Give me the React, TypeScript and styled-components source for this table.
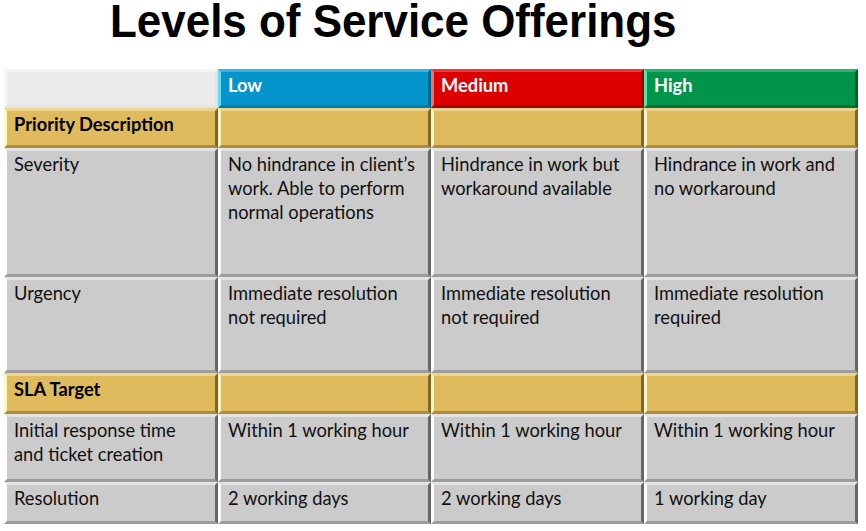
import React from "react";
import styled, { createGlobalStyle, css } from "styled-components";

const Global = createGlobalStyle`
  html, body { margin: 0; padding: 0; background: #ffffff; }
  body { font-family: "Lato", "Open Sans", sans-serif; }
`;

const Page = styled.div`
  width: 866px;
  height: 531px;
  background: #fff;
  display: flex;
  flex-direction: column;
  overflow: hidden;
`;

const TitleBar = styled.div`
  height: 69px;
  padding-left: 110px;
  box-sizing: border-box;
`;

const Title = styled.h1`
  margin: 0;
  display: inline-block;
  font-family: "Liberation Sans", Arial, sans-serif;
  font-weight: 700;
  font-size: 46px;
  line-height: 42px;
  color: #000;
  white-space: nowrap;
  transform-origin: 0 0;
  transform: scaleX(0.955);
`;

const Table = styled.div`
  margin-left: 4px;
  display: grid;
  grid-template-columns: 214px 213px 213px 214px;
  grid-template-rows: 39px 40px 129px 96px 41px 68px 42px;
`;

type Tone = "blank" | "blue" | "red" | "green" | "gold" | "gray";

const tones: Record<Tone, { bg: string; t: string; l: string; r: string; b: string; fg: string }> = {
  blank: { bg: "#ebebeb", t: "#f4f4f4", l: "#f6f6f6", r: "#e2e2e2", b: "#e4e4e4", fg: "#000" },
  blue: { bg: "#0395cc", t: "#3ab3e0", l: "#5cdcf6", r: "#02658e", b: "#037aa8", fg: "#fff" },
  red: { bg: "#dc0000", t: "#e83c3c", l: "#f27070", r: "#8c0000", b: "#a40000", fg: "#fff" },
  green: { bg: "#00954a", t: "#2fb271", l: "#4ee6a4", r: "#005a2c", b: "#006f38", fg: "#fff" },
  gold: { bg: "#dfbb5d", t: "#edd48e", l: "#fff5c4", r: "#7e6628", b: "#ad8d3e", fg: "#000" },
  gray: { bg: "#cbcbcb", t: "#e3e3e3", l: "#ffffff", r: "#666666", b: "#9c9c9c", fg: "#111" },
};

const Cell = styled.div<{ $tone: Tone; $bold?: boolean }>`
  box-sizing: border-box;
  padding: 1px 4px 0 7px;
  font-size: 18.3px;
  line-height: 24px;
  white-space: pre-line;
  ${({ $tone }) => {
    const c = tones[$tone];
    return css`
      background: ${c.bg};
      color: ${c.fg};
      border-style: solid;
      border-width: 3px;
      border-top-color: ${c.t};
      border-left-color: ${c.l};
      border-right-color: ${c.r};
      border-bottom-color: ${c.b};
    `;
  }}
  font-weight: ${({ $bold }) => ($bold ? 700 : 400)};
`;

type Row = { tone: Tone; cells: string[]; bold?: boolean };

const headerTones: Tone[] = ["blank", "blue", "red", "green"];

const rows: Row[] = [
  { tone: "gold", bold: true, cells: ["Priority Description", "", "", ""] },
  {
    tone: "gray",
    cells: [
      "Severity",
      "No hindrance in client\u2019s\nwork. Able to perform\nnormal operations",
      "Hindrance in work but\nworkaround available",
      "Hindrance in work and\nno workaround",
    ],
  },
  {
    tone: "gray",
    cells: [
      "Urgency",
      "Immediate resolution\nnot required",
      "Immediate resolution\nnot required",
      "Immediate resolution\nrequired",
    ],
  },
  { tone: "gold", bold: true, cells: ["SLA Target", "", "", ""] },
  {
    tone: "gray",
    cells: [
      "Initial response time\nand ticket creation",
      "Within 1 working hour",
      "Within 1 working hour",
      "Within 1 working hour",
    ],
  },
  {
    tone: "gray",
    cells: ["Resolution", "2 working days", "2 working days", "1 working day"],
  },
];

const header = ["", "Low", "Medium", "High"];

export default function App() {
  return (
    <Page>
      <Global />
      <TitleBar>
        <Title>Levels of Service Offerings</Title>
      </TitleBar>
      <Table>
        {header.map((h, i) => (
          <Cell key={"h" + i} $tone={headerTones[i]} $bold>
            {h}
          </Cell>
        ))}
        {rows.map((r, ri) =>
          r.cells.map((c, ci) => (
            <Cell key={ri + "-" + ci} $tone={r.tone} $bold={r.bold && ci === 0}>
              {c}
            </Cell>
          ))
        )}
      </Table>
    </Page>
  );
}
